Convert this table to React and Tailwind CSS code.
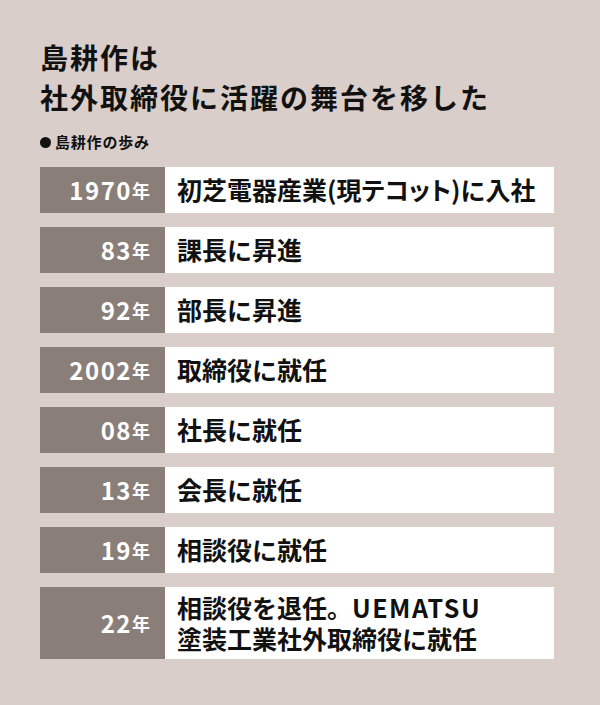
export default function App() {
  const rows = [
    ["1970", <>初芝電器産業<span className="[font-feature-settings:'palt']">(現テコット)</span>に入社</>],
    ["83", "課長に昇進"],
    ["92", "部長に昇進"],
    ["2002", "取締役に就任"],
    ["08", "社長に就任"],
    ["13", "会長に就任"],
    ["19", "相談役に就任"],
  ];
  const font = { fontFamily: '"Noto Sans CJK JP", "Noto Sans", sans-serif' };
  const Year = ({ y }) => (
    <div className="w-[125px] bg-[#8a7e79] text-white flex items-center justify-end pr-[15px] font-bold">
      <span className="text-[24px] leading-none tracking-[1.5px]">{y}</span>
      <span className="text-[18px] leading-none">年</span>
    </div>
  );
  return (
    <div className="w-[600px] h-[705px] bg-[#d9ceca] pl-[40px] pt-[37px]" style={font}>
      <h1 className="text-[28px] leading-[40px] font-bold text-[#111] tracking-[2px]">
        島耕作は<br />社外取締役に活躍の舞台を移した
      </h1>
      <div className="mt-[15px] text-[15px] leading-[20px] font-bold text-[#111] flex items-center tracking-[0.8px]">
        <span className="inline-block w-[11px] h-[11px] rounded-full bg-[#111] mr-[4px]"></span>
        島耕作の歩み
      </div>
      <div className="mt-[15px] w-[514px] flex flex-col gap-[14px]">
        {rows.map(([y, t]) => (
          <div key={y} className="flex h-[46px]">
            <Year y={y} />
            <div className="flex-1 bg-white flex items-center pl-[12px] text-[25px] font-bold text-[#111] whitespace-nowrap">
              {t}
            </div>
          </div>
        ))}
        <div className="flex h-[72px]">
          <Year y="22" />
          <div className="flex-1 bg-white flex flex-col justify-center pl-[12px] text-[25px] leading-[31px] font-bold text-[#111]">
            <div>相談役を退任。<span className="tracking-[1.5px]">UEMATSU</span></div>
            <div>塗装工業社外取締役に就任</div>
          </div>
        </div>
      </div>
    </div>
  );
}
